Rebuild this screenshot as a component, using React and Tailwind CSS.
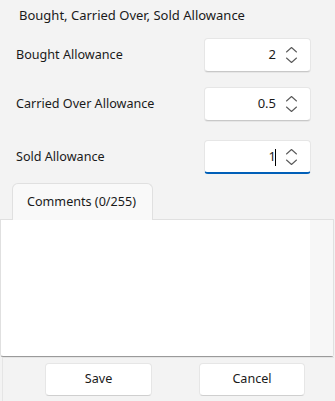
import React from "react";

function Chevrons() {
  return (
    <svg width="13" height="20" viewBox="0 0 13 20" fill="none" stroke="#5a5a5a" strokeWidth="1.1" strokeLinecap="round" strokeLinejoin="round">
      <path d="M1.5 7 L6.5 2.5 L11.5 7" />
      <path d="M1.5 13 L6.5 17.5 L11.5 13" />
    </svg>
  );
}

function Spin({ value, focused, cursor }) {
  return (
    <div
      className={
        "w-[107px] h-[34px] bg-white rounded-[4px] border border-[#e6e6e6] flex items-center justify-end pr-[12px] " +
        (focused ? "border-b-2 border-b-[#005fb8]" : "border-b-[#c8c8c8] shadow-[0_1px_0_rgba(0,0,0,0.05)]")
      }
    >
      <span className="text-[13px] text-[#1a1a1a] mr-[9px] relative">
        {value}
        {cursor && <span className="absolute left-[6px] top-[2px] w-px h-[17px] bg-[#000]" />}
      </span>
      <Chevrons />
    </div>
  );
}

export default function App() {
  return (
    <div
      className="w-[335px] h-[401px] bg-[#f3f3f3] flex flex-col text-[#1a1a1a] overflow-hidden"
      style={{ fontFamily: '"Noto Sans", "Open Sans", sans-serif' }}
    >
      <div className="pl-[19px] pt-[6px] h-[38px] text-[13px] leading-[18px]">Bought, Carried Over, Sold Allowance</div>
      <div className="flex items-center justify-between pl-[16px] pr-[24px]">
        <span className="text-[12.6px]">Bought Allowance</span>
        <Spin value="2" />
      </div>
      <div className="flex items-center justify-between pl-[16px] pr-[24px] mt-[15px]">
        <span className="text-[12.6px]">Carried Over Allowance</span>
        <Spin value="0.5" />
      </div>
      <div className="flex items-center justify-between pl-[16px] pr-[24px] mt-[19px]">
        <span className="text-[12.6px]">Sold Allowance</span>
        <Spin value="1" focused cursor />
      </div>
      <div className="mt-[9px] pl-[12px] flex">
        <div className="w-[141px] h-[37px] bg-[#f9f9f9] border border-b-0 border-[#e0e0e0] rounded-t-[6px] flex items-center pl-[14px] text-[12.6px] -mb-px relative z-10">
          Comments (0/255)
        </div>
      </div>
      <div className="h-[138px] mr-[1px] border border-[#e0e0e0] border-b-[#9a9a9a] rounded-b-[3px] bg-white flex">
        <div className="flex-1" />
        <div className="w-[23px] bg-[#f7f7f7]" />
      </div>
      <div className="flex-1 ml-[2px] mr-[1px] border-l border-t border-[#e5e5e5] flex items-start pt-[5px]">
        <button className="ml-[42px] w-[107px] h-[33px] bg-white rounded-[4px] border border-[#e6e6e6] border-b-[#cfcfcf] text-[12.6px]">Save</button>
        <button className="ml-[47px] w-[106px] h-[33px] bg-white rounded-[4px] border border-[#e6e6e6] border-b-[#cfcfcf] text-[12.6px]">Cancel</button>
      </div>
    </div>
  );
}
